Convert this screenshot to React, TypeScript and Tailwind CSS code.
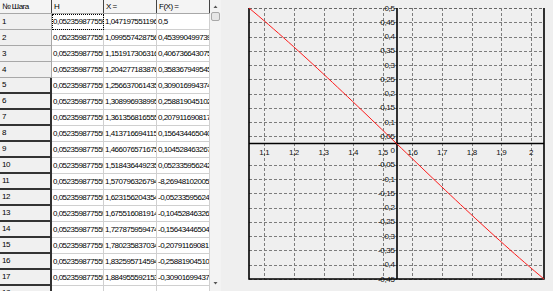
import React from "react";

const H = "0,0523598775598299";

const rows = [
  ["1,0471975511966", "0,5"],
  ["1,09955742875643", "0,453990499739547"],
  ["1,15191730631626", "0,4067366430758"],
  ["1,20427718387609", "0,3583679495453"],
  ["1,25663706143592", "0,309016994374947"],
  ["1,30899693899575", "0,258819045102521"],
  ["1,36135681655558", "0,207911690817759"],
  ["1,41371669411541", "0,156434465040231"],
  ["1,46607657167524", "0,104528463267653"],
  ["1,51843644923507", "0,0523359562429438"],
  ["1,5707963267949", "-8,26948102005129E-16"],
  ["1,62315620435473", "-0,0523359562429438"],
  ["1,67551608191456", "-0,104528463267653"],
  ["1,72787595947439", "-0,156434465040231"],
  ["1,78023583703422", "-0,207911690817759"],
  ["1,83259571459405", "-0,258819045102521"],
  ["1,88495559215388", "-0,309016994374947"],
  ["1,93731546971371", "-0,3583679495453"],
];

const Grid = () => (
  <div className="w-[210px] shrink-0">
    <div className="flex h-[14px] border-b border-[#a8a8a8] bg-[#f4f4f4]">
      {["№ Шага", "H", "X =", "F(X) ="].map((t, i) => (
        <div
          key={t}
          className={`${i < 2 ? "w-[52px]" : "w-[53px]"} overflow-hidden whitespace-nowrap border-r border-[#444] px-[2px] leading-[13px]`}
        >
          {t}
        </div>
      ))}
    </div>
    {rows.map(([x, f], i) => {
      const dark = i >= 4;
      return (
        <div key={i} className="flex h-4">
          <div
            className={`flex w-[52px] items-center bg-[#f0f0f0] px-[2px] ${
              dark ? "border-r-2 border-b-2 border-[#333]" : "border-r border-b border-[#a8a8a8]"
            }`}
          >
            {i + 1}
          </div>
          <div
            className={`flex w-[52px] items-center overflow-hidden whitespace-nowrap border-r border-b border-[#d0d0d0] bg-white pl-[1px] ${
              i === 0 ? "outline outline-1 outline-dotted outline-black -outline-offset-1" : ""
            }`}
          >
            {H}
          </div>
          <div className="flex w-[53px] items-center overflow-hidden whitespace-nowrap border-r border-b border-[#d0d0d0] bg-white pl-[1px]">
            {x}
          </div>
          <div className="flex w-[53px] items-center overflow-hidden whitespace-nowrap border-r border-b border-[#d0d0d0] bg-white pl-[1px]">
            {f}
          </div>
        </div>
      );
    })}
  </div>
);

const Scrollbar = () => (
  <div className="flex w-[11px] shrink-0 flex-col items-center bg-[#f3f3f3]">
    <svg width="7" height="10" className="mt-[1px]">
      <polygon points="1.5,7 5.5,7 3.5,4.5" fill="#555" />
    </svg>
    <div className="mt-[1px] h-[9px] w-[9px] rounded-[2px] border border-[#a8a8a8] bg-[#e6e6e6]" />
    <div className="flex-1" />
    <svg width="7" height="10" className="mb-[2px]">
      <polygon points="1.5,3 5.5,3 3.5,5.5" fill="#555" />
    </svg>
  </div>
);

const X0 = 248;
const X1 = 543;
const Y0 = 8;
const Y1 = 279;
const AXY = 143.5;
const AXX = 396;

const yLabels = [
  "0,5", "0,45", "0,4", "0,35", "0,3", "0,25", "0,2", "0,15", "0,1", "0,05",
  "0", "-0,05", "-0,1", "-0,15", "-0,2", "-0,25", "-0,3", "-0,35", "-0,4", "-0,45",
];
const xLabels = ["1,1", "1,2", "1,3", "1,4", "1,5", "1,6", "1,7", "1,8", "1,9", "2"];

const Chart = () => {
  const a = Math.PI / 3;
  const pts: string[] = [];
  for (let i = 0; i <= 60; i++) {
    const x = a + (a * i) / 60;
    const px = X0 + ((x - a) / a) * (X1 - X0);
    const py = AXY - Math.cos(x) * (Y1 - Y0);
    pts.push(`${px.toFixed(2)},${py.toFixed(2)}`);
  }
  const stepY = (Y1 - Y0) / 19;
  const stepX = 29.63;
  return (
    <svg width="332" height="291" viewBox="221 0 332 291" className="shrink-0">
      {yLabels.map((_, k) =>
        k === 0 || k === 10 ? null : (
          <line
            key={k}
            x1={X0}
            x2={X1}
            y1={Math.round(Y0 + k * stepY) + 0.5}
            y2={Math.round(Y0 + k * stepY) + 0.5}
            stroke="#7c7c7c"
            strokeDasharray="3 2"
          />
        )
      )}
      <line x1={X0} x2={X1} y1={Y0 + 0.5} y2={Y0 + 0.5} stroke="#666" strokeDasharray="3 2" />
      {xLabels.map((_, j) => {
        const x = Math.round(263.3 + j * stepX) + 0.5;
        return <line key={j} x1={x} x2={x} y1={Y0} y2={Y1} stroke="#7c7c7c" strokeDasharray="3 2" />;
      })}
      <line x1={X0} x2={X1} y1={AXY} y2={AXY} stroke="#000" strokeWidth="1.6" />
      <line x1={AXX} x2={AXX} y1={Y0} y2={Y1} stroke="#000" strokeWidth="1.6" />
      <polyline points={`${X0},${Y0} ${X0},${Y1} ${X1},${Y1} ${X1},${Y0}`} fill="none" stroke="#000" strokeWidth="1.6" />
      <polyline points={pts.join(" ")} fill="none" stroke="#ff1a1a" strokeWidth="1" />
      <g fontFamily="Liberation Sans, sans-serif" fontSize="8" letterSpacing="-0.35" fill="#111">
        {yLabels.map((t, k) => (
          <text key={t} x={393.5} y={Y0 + k * stepY} textAnchor="end" dominantBaseline="central">
            {t}
          </text>
        ))}
        {xLabels.map((t, j) => (
          <text key={t} x={263.3 + j * stepX} y={152.5} textAnchor="middle" dominantBaseline="central">
            {t}
          </text>
        ))}
      </g>
    </svg>
  );
};

export default function App() {
  return (
    <div className="flex h-[291px] w-[553px] overflow-hidden bg-[#efefef] font-['Liberation_Sans',sans-serif] text-[8px] tracking-[-0.5px] text-black">
      <Grid />
      <Scrollbar />
      <div className="w-[1px] shrink-0" />
      <Chart />
    </div>
  );
}
